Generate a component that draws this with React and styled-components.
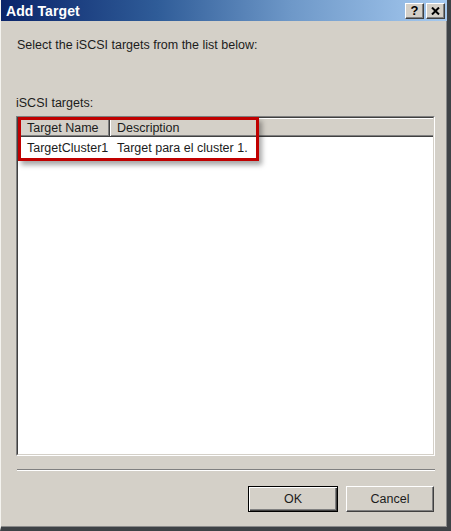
import React from 'react'
import styled, { createGlobalStyle } from 'styled-components'

const GlobalStyle = createGlobalStyle`
  html, body {
    margin: 0;
    padding: 0;
    background: #d4d0c8;
  }
  * {
    box-sizing: border-box;
  }
`

const Window = styled.div`
  width: 451px;
  height: 531px;
  display: flex;
  flex-direction: column;
  background: #d4d0c8;
  border-left: 1px solid #f4f3ef;
  border-right: 4px solid #3e4246;
  border-bottom: 4px solid #3e4246;
  box-shadow: inset -1px -1px #8a8a8a;
  font-family: "Liberation Sans", Arial, sans-serif;
  color: #1c1c1c;
  overflow: hidden;
`

const TitleBar = styled.div`
  height: 21px;
  flex: none;
  display: flex;
  align-items: center;
  justify-content: space-between;
  padding: 0 2px 0 5px;
  background: linear-gradient(to right, #0a246a 0%, #2f5c98 35%, #6e98c8 65%, #a6caf0 100%);
`

const Title = styled.span`
  color: #fff;
  font-weight: bold;
  font-size: 14px;
  letter-spacing: 0.1px;
`

const TitleButtons = styled.div`
  display: flex;
  gap: 2px;
`

const CaptionButton = styled.div`
  width: 19px;
  height: 16px;
  display: flex;
  align-items: center;
  justify-content: center;
  background: #d4d0c8;
  border: 1px solid;
  border-color: #ffffff #404040 #404040 #ffffff;
  box-shadow: inset -1px -1px #808080;
  font-weight: bold;
  font-size: 13px;
  color: #000;
`

const Body = styled.div`
  flex: 1;
  display: flex;
  flex-direction: column;
  padding: 17px 12px 0 15px;
`

const Prompt = styled.div`
  font-size: 12.5px;
  line-height: 15px;
  padding-left: 1px;
`

const FieldLabel = styled.div`
  font-size: 12.5px;
  line-height: 15px;
  margin-top: 43px;
`

const ListWrap = styled.div`
  position: relative;
  margin-top: 5px;
  height: 340px;
  border: 1px solid;
  border-color: #808080 #ffffff #ffffff #808080;
  background: #fff;
`

const ListInner = styled.div`
  height: 100%;
  border: 1px solid;
  border-color: #404040 #d4d0c8 #d4d0c8 #404040;
`

const HeaderRow = styled.div`
  display: flex;
  height: 19px;
  background: #d4d0c8;
  border-top: 1px solid #ffffff;
  border-bottom: 1px solid #404040;
  box-shadow: inset 0 -1px #808080;
`

const HeaderCell = styled.div`
  width: ${p => p.$width}px;
  flex: ${p => (p.$fill ? 1 : 'none')};
  display: flex;
  align-items: center;
  padding-left: ${p => p.$pad}px;
  font-size: 12.5px;
  border-right: ${p => (p.$fill ? 'none' : '1px solid #404040')};
  box-shadow: ${p => (p.$fill ? 'none' : 'inset -1px 0 #808080, 1px 0 #ffffff')};
`

const DataRow = styled.div`
  display: flex;
  height: 22px;
  align-items: center;
  font-size: 12.5px;
`

const DataCell = styled.div`
  width: ${p => p.$width}px;
  flex: ${p => (p.$fill ? 1 : 'none')};
  padding-left: ${p => p.$pad}px;
  white-space: nowrap;
`

const Highlight = styled.div`
  position: absolute;
  left: 1px;
  top: 0px;
  width: 241px;
  height: 44px;
  border: 3px solid #c00000;
  box-shadow: 3px 4px 5px rgba(0, 0, 0, 0.35);
  pointer-events: none;
`

const Separator = styled.div`
  margin-top: 13px;
  height: 2px;
  margin-left: 1px;
  border-top: 1px solid #808080;
  border-bottom: 1px solid #ffffff;
`

const ButtonRow = styled.div`
  display: flex;
  justify-content: flex-end;
  gap: 8px;
  margin-top: 15px;
  padding-right: 1px;
`

const Button = styled.button`
  width: ${p => (p.$default ? 90 : 88)}px;
  height: 26px;
  padding: 0;
  font-family: "Liberation Sans", Arial, sans-serif;
  font-size: 12.5px;
  color: #1c1c1c;
  background: #d4d0c8;
  border: 1px solid;
  border-color: ${p => (p.$default ? '#000' : '#ffffff #404040 #404040 #ffffff')};
  box-shadow: ${p => (p.$default
    ? 'inset 1px 1px #ffffff, inset -1px -1px #404040, inset -2px -2px #808080'
    : 'inset -1px -1px #808080')};
`

export default function App() {
  return (
    <>
      <GlobalStyle />
      <Window>
        <TitleBar>
          <Title>Add Target</Title>
          <TitleButtons>
            <CaptionButton>?</CaptionButton>
            <CaptionButton>
              <svg width="9" height="8" viewBox="0 0 9 8">
                <path d="M1 0.5 L8 7.5 M8 0.5 L1 7.5" stroke="#000" strokeWidth="2" />
              </svg>
            </CaptionButton>
          </TitleButtons>
        </TitleBar>
        <Body>
          <Prompt>Select the iSCSI targets from the list below:</Prompt>
          <FieldLabel>iSCSI targets:</FieldLabel>
          <ListWrap>
            <ListInner>
              <HeaderRow>
                <HeaderCell $width={92} $pad={9}>Target Name</HeaderCell>
                <HeaderCell $fill $pad={7}>Description</HeaderCell>
              </HeaderRow>
              <DataRow>
                <DataCell $width={92} $pad={9}>TargetCluster1</DataCell>
                <DataCell $fill $pad={7}>Target para el cluster 1.</DataCell>
              </DataRow>
            </ListInner>
            <Highlight />
          </ListWrap>
          <Separator />
          <ButtonRow>
            <Button $default>OK</Button>
            <Button>Cancel</Button>
          </ButtonRow>
        </Body>
      </Window>
    </>
  )
}
